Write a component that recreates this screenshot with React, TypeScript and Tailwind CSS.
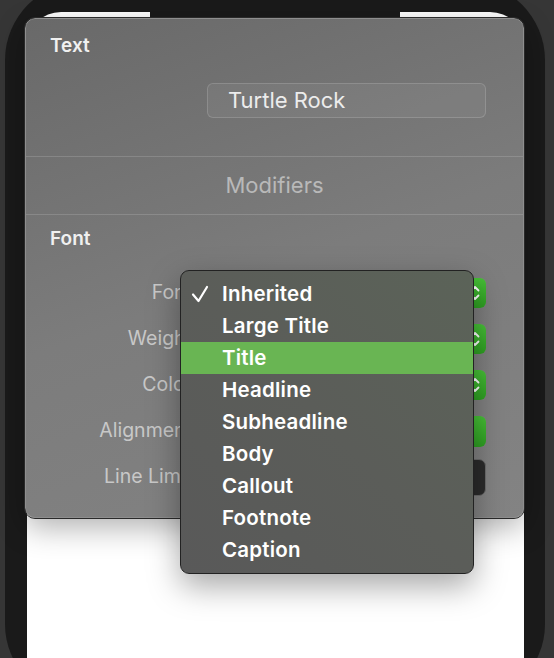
const fontItems = [
  "Inherited",
  "Large Title",
  "Title",
  "Headline",
  "Subheadline",
  "Body",
  "Callout",
  "Footnote",
  "Caption",
];

function Chevrons() {
  return (
    <svg width="10" height="16" viewBox="0 0 10 16" fill="none" stroke="white" strokeWidth="1.8" strokeLinecap="round" strokeLinejoin="round">
      <path d="M1.5 5.5 5 2l3.5 3.5" />
      <path d="M1.5 10.5 5 14l3.5-3.5" />
    </svg>
  );
}

function PopupButton() {
  return (
    <div className="flex h-[30px] w-full overflow-hidden rounded-[6px] bg-white/10">
      <div className="flex-1" />
      <div className="flex w-[22px] items-center justify-center bg-linear-to-b from-[#47c137] to-[#2e9f22]">
        <Chevrons />
      </div>
    </div>
  );
}

function Row({ label, children }: { label: string; children: React.ReactNode }) {
  return (
    <div className="grid h-[46px] grid-cols-[166px_279px] items-center gap-x-[15px]">
      <span className="text-right text-[19.5px] text-[#c8c8c8]">{label}</span>
      {children}
    </div>
  );
}

export default function App() {
  return (
    <div className="relative h-[658px] w-[554px] overflow-hidden bg-[#363636] font-['Inter','Noto_Sans',sans-serif]">
      {/* phone body */}
      <div className="-mt-[18px] ml-[5px] h-[720px] w-[540px] rounded-[78px] bg-[#1a1a1a] pl-[22px] pr-[21px] pt-[30px]">
        <div className="relative h-full rounded-t-[34px] bg-white">
          <div className="absolute left-[123px] top-0 h-[10px] w-[250px] bg-[#1a1a1a]" />
        </div>
      </div>

      {/* inspector popover */}
      <div className="absolute left-[25px] top-[18px] flex h-[500px] w-[499px] flex-col rounded-[10px] border border-[#8e8e8e] bg-linear-160 from-[#696969] via-[#7c7c7c] to-[#838383] shadow-[0_10px_30px_rgba(0,0,0,0.3)] outline outline-[#2a2a2a]">
        <div className="flex h-[137px] flex-col pl-[24px] pt-[15px]">
          <h2 className="text-[19px] font-semibold leading-[24px] text-[#f0f0f0]">Text</h2>
          <div className="ml-[157px] mt-[25px] flex h-[35px] w-[279px] items-center rounded-[6px] border border-white/15 bg-white/5 pl-[20px] text-[22px] text-[#ececec]">
            Turtle Rock
          </div>
        </div>
        <div className="h-px bg-white/15" />
        <div className="flex h-[57px] items-center justify-center text-[22px] text-[#b9b9b9]">Modifiers</div>
        <div className="h-px bg-white/15" />
        <div className="flex flex-col pt-[12px]">
          <h2 className="pl-[24px] text-[19px] font-semibold leading-[24px] text-[#f0f0f0]">Font</h2>
          <div className="mt-[19px] flex flex-col">
            <Row label="Font">
              <PopupButton />
            </Row>
            <Row label="Weight">
              <PopupButton />
            </Row>
            <Row label="Color">
              <PopupButton />
            </Row>
            <Row label="Alignment">
              <div className="flex h-[31px] overflow-hidden rounded-[6px] bg-white/10">
                <div className="flex-1" />
                <div className="w-[60px] bg-linear-to-b from-[#47c137] to-[#2e9f22]" />
              </div>
            </Row>
            <Row label="Line Limit">
              <div className="h-[37px] rounded-[7px] border border-[#6c6c6c] bg-[#2b2b2b]" />
            </Row>
          </div>
        </div>
      </div>

      {/* font menu */}
      <div className="absolute left-[180px] top-[270px] w-[294px] rounded-[9px] border border-[#222] bg-linear-to-tr from-[#595959] via-[#5b5d59] to-[#5b6358] py-[7px] shadow-[0_12px_32px_rgba(0,0,0,0.35)]">
        {fontItems.map((item) => (
          <div
            key={item}
            className={
              item === "Title"
                ? "relative flex h-[32px] items-center bg-[#69b553] pl-[41px] text-[20.5px] font-semibold tracking-[0.01em] text-white"
                : "relative flex h-[32px] items-center pl-[41px] text-[20.5px] font-semibold tracking-[0.01em] text-white"
            }
          >
            {item === "Inherited" && (
              <svg className="absolute left-[9px] top-[7px]" width="19" height="18" viewBox="0 0 19 18" fill="none" stroke="white" strokeWidth="2.2" strokeLinecap="round" strokeLinejoin="round">
                <path d="M3 9.5 8.5 16 17 2" />
              </svg>
            )}
            {item}
          </div>
        ))}
      </div>
    </div>
  );
}
